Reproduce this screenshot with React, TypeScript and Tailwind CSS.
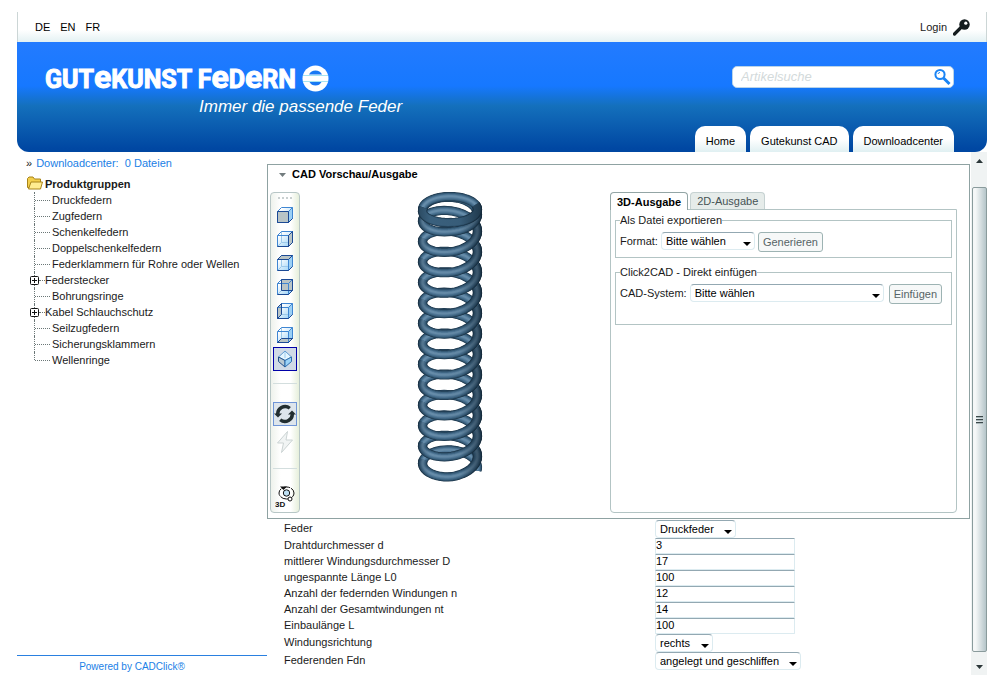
import type { ReactNode } from 'react';
import { useState } from 'react';
import clsx from 'clsx';

const languages = ['DE', 'EN', 'FR'];
const navItems = ['Home', 'Gutekunst CAD', 'Downloadcenter'];

const productGroups = [
  { name: 'Druckfedern' },
  { name: 'Zugfedern' },
  { name: 'Schenkelfedern' },
  { name: 'Doppelschenkelfedern' },
  { name: 'Federklammern für Rohre oder Wellen' },
  { name: 'Federstecker', expandable: true },
  { name: 'Bohrungsringe' },
  { name: 'Kabel Schlauchschutz', expandable: true },
  { name: 'Seilzugfedern' },
  { name: 'Sicherungsklammern' },
  { name: 'Wellenringe' },
];

const dimensions = [
  { id: 'd', label: 'Drahtdurchmesser d', value: '3' },
  { id: 'D', label: 'mittlerer Windungsdurchmesser D', value: '17' },
  { id: 'L0', label: 'ungespannte Länge L0', value: '100' },
  { id: 'n', label: 'Anzahl der federnden Windungen n', value: '12' },
  { id: 'nt', label: 'Anzahl der Gesamtwindungen nt', value: '14' },
  { id: 'L', label: 'Einbaulänge L', value: '100' },
];

const cubeFaces: Record<string, string> = {
  Vorne: '0.5,4.5 11.5,4.5 11.5,15.5 0.5,15.5',
  Rechts: '11.5,4.5 15.5,0.5 15.5,11.5 11.5,15.5',
  Oben: '0.5,4.5 4.5,0.5 15.5,0.5 11.5,4.5',
  Hinten: '4.5,0.5 15.5,0.5 15.5,11.5 4.5,11.5',
  Links: '0.5,4.5 4.5,0.5 4.5,11.5 0.5,15.5',
  Unten: '0.5,15.5 4.5,11.5 15.5,11.5 11.5,15.5',
};

function CubeIcon({ face }: { face: string }) {
  const solid = face === 'Vorne';
  const gradientId = `glass-${face}`;
  return (
    <svg width="16" height="16" viewBox="0 0 16 16" fill="none">
      <defs>
        <linearGradient id={gradientId} x1="0" y1="0" x2="1" y2="1">
          <stop offset="0.2" stopColor="#ffffff" />
          <stop offset="1" stopColor="#8fcdf6" />
        </linearGradient>
      </defs>
      <polygon points="0.5,4.5 4.5,0.5 15.5,0.5 15.5,11.5 11.5,15.5 0.5,15.5" fill={`url(#${gradientId})`} />
      <polygon points="11.5,4.5 15.5,0.5 15.5,11.5 11.5,15.5" fill="#9bd0f5" />
      {!solid && <path d="M4.5 0.5V11.5H15.5M4.5 11.5L0.5 15.5" stroke="#9cc9ea" />}
      <polygon points={cubeFaces[face]} fill="#b8c4c6" />
      <path d="M0.5 4.5H11.5V15.5H0.5ZM0.5 4.5L4.5 0.5H15.5V11.5L11.5 15.5M11.5 4.5L15.5 0.5" stroke="#3f86d2" />
      <polygon points={cubeFaces[face]} stroke="#1c4a94" />
      <path d="M0.5 15.5H11.5L15.5 11.5" stroke="#1c4a94" />
    </svg>
  );
}

function IsoIcon() {
  return (
    <svg width="16" height="18" viewBox="0 0 16 18" fill="none" strokeLinejoin="round">
      <path d="M8 1L14.5 7L8 10.5L1.5 7Z" fill="#e4f5ff" stroke="#5f9ad0" />
      <path d="M1.5 7L8 10.5V17L1.5 11.5Z" fill="#b9c9d2" stroke="#1f4f8a" />
      <path d="M8 10.5L14.5 7V11.5L8 17Z" fill="#9bd3f7" stroke="#2f6fae" />
      <path d="M8 2V8" stroke="#9ccbed" />
    </svg>
  );
}

function RotateIcon() {
  return (
    <svg width="22" height="22" viewBox="0 0 22 22" fill="none">
      <path d="M3.8 12A7.4 7.4 0 0 1 15.8 5.2" stroke="#222e30" strokeWidth="3.4" />
      <path d="M18.2 10A7.4 7.4 0 0 1 6.2 16.8" stroke="#222e30" strokeWidth="3.4" />
      <path d="M0 10.5H8L4 14.5Z" fill="#222e30" />
      <path d="M22 11.5H14L18 7.5Z" fill="#222e30" />
    </svg>
  );
}

function FlashIcon() {
  return (
    <svg width="18" height="22" viewBox="0 0 18 22">
      <path d="M11.5 0.5L1.5 12H7.5L5.5 21.5L16.5 9H10Z" fill="#f1f4f4" stroke="#cbd3d3" strokeLinejoin="round" />
    </svg>
  );
}

function View3dIcon() {
  return (
    <svg width="20" height="24" viewBox="0 0 20 24" fill="none">
      <ellipse cx="11.5" cy="9" rx="7.5" ry="6" stroke="#111" strokeDasharray="8 1" />
      <circle cx="11.5" cy="9" r="3.2" fill="#bfe0f4" stroke="#111" />
      <circle cx="15" cy="15" r="2" fill="#fff" stroke="#111" />
      <path d="M5 2.5H12L8.5 6Z" fill="#111" />
      <text x="0" y="23" fontSize="8" fontFamily="Liberation Sans, sans-serif" fontWeight="bold" fill="#111">3D</text>
    </svg>
  );
}

// height of the wire axis after `turn` windings; the first winding is closed
function axisY(turn: number) {
  if (turn < 0.25) return 17.5;
  if (turn < 1.25) return 17.5 + (turn - 0.25) * 6.5;
  return Math.min(24 + (turn - 1.25) * 20.45, 269.4 + (turn - 13.25) * 8);
}

function coilPath(from: number, to: number) {
  const points: string[] = [];
  for (let i = 0; i <= 28; i++) {
    const turn = from + ((to - from) * i) / 28;
    const angle = turn * Math.PI * 2;
    const depth = turn < 0.5 ? 13 : 15.5;
    points.push(`${(33 + 27.5 * Math.cos(angle)).toFixed(2)},${(axisY(turn) + depth * Math.sin(angle)).toFixed(2)}`);
  }
  return `M${points.join('L')}`;
}

const wireLayers = [
  { width: 9.2, color: '#1b3448', lift: 0 },
  { width: 8.2, color: '#2b4d67', lift: 0 },
  { width: 6.8, color: '#3a607d', lift: 0 },
  { width: 5.2, color: '#476f8e', lift: 0 },
  { width: 3.6, color: '#567d9c', lift: -0.1 },
  { width: 2, color: '#668ca9', lift: -0.2 },
];

function Wire({ from, to, flat = false }: { from: number; to: number; flat?: boolean }) {
  const d = coilPath(from, to);
  const layers = flat ? wireLayers.slice(0, 3) : wireLayers;
  return (
    <g fill="none" strokeLinejoin="round">
      {layers.map((layer) => (
        <path key={layer.width} d={d} stroke={layer.color} strokeWidth={layer.width} transform={`translate(0 ${layer.lift})`} />
      ))}
    </g>
  );
}

function Spring() {
  const windings = Array.from({ length: 14 }, (_, i) => 13 - i);
  return (
    <svg className="mr-[10px]" width="66" height="292" viewBox="0 0 66 292" role="img" aria-label="Druckfeder">
      <defs>
        <linearGradient id="shade" gradientUnits="userSpaceOnUse" x1="0" y1="0" x2="66" y2="0">
          <stop offset="0" stopColor="#0b1a26" stopOpacity="0.35" />
          <stop offset="0.2" stopColor="#0b1a26" stopOpacity="0" />
          <stop offset="0.65" stopColor="#0b1a26" stopOpacity="0.05" />
          <stop offset="1" stopColor="#0b1a26" stopOpacity="0.6" />
        </linearGradient>
      </defs>
      {windings.map((n) => (
        <Wire key={n} from={n + 0.48} to={n + 1.03} />
      ))}
      <Wire from={-0.5} to={0.02} />
      {windings.map((n) => (
        <g key={n}>
          <Wire from={n - 0.06} to={n + 0.54} flat={n === 0} />
          <path d={coilPath(n - 0.06, n + 0.54)} fill="none" stroke="url(#shade)" strokeWidth="9.2" />
        </g>
      ))}
    </svg>
  );
}

interface SelectProps {
  id: string;
  options: string[];
  className: string;
}

function Select({ id, options, className }: SelectProps) {
  return (
    <div className={clsx('relative h-[18px]', className)}>
      <select
        id={id}
        className="block h-full w-full appearance-none rounded-sm border border-[#dcebf0] border-t-[#93a8b2] bg-white pl-1 text-[11px] leading-4 text-black outline-none"
      >
        {options.map((option) => (
          <option key={option}>{option}</option>
        ))}
      </select>
      <svg className="pointer-events-none absolute right-1 bottom-1 h-1 w-2" viewBox="0 0 8 4">
        <path d="M0 0H8L4 4Z" fill="#000" />
      </svg>
    </div>
  );
}

function ToolButton({ label, variant, children }: { label: string; variant?: 'selected' | 'active'; children: ReactNode }) {
  return (
    <button
      type="button"
      aria-label={label}
      className={clsx(
        'flex size-6 shrink-0 items-center justify-center',
        variant === 'selected' && 'border border-[#0000a8] bg-[#d0dae6]',
        variant === 'active' && 'border border-[#6f95d6] bg-[#dde5ec]',
      )}
    >
      {children}
    </button>
  );
}

function Header() {
  return (
    <header>
      <div className="flex h-[30px] items-center justify-between border-x border-[#ccd6d6] bg-linear-to-b from-white from-60% to-[#e3f1f3] pr-4 pl-[17px]">
        <nav className="flex gap-[10px]">
          {languages.map((lang) => (
            <a key={lang} href="#" className="text-black">{lang}</a>
          ))}
        </nav>
        <a href="#" className="flex items-center gap-[6px]">
          Login
          <svg width="17" height="17" viewBox="0 0 17 17">
            <path d="M1.5 15L9 7.5" stroke="#141c1e" strokeWidth="3.2" strokeLinecap="round" />
            <circle cx="11.5" cy="5.5" r="5.2" fill="#141c1e" />
            <circle cx="12.8" cy="4.2" r="1.6" fill="#fff" />
          </svg>
        </a>
      </div>
      <div className="flex h-[110px] justify-between rounded-b-xl bg-[linear-gradient(#237bff,#1678ff_40%,#1470bc_58%,#0047a2_97%)] pr-[33px] pl-7">
        <div className="pt-5">
          <div className="flex h-8 items-center gap-[6px] font-[Roboto,sans-serif] text-[25px] font-bold text-white [-webkit-text-stroke:1px_white]">
            <span className="leading-8">
              GUT<span className="text-[32px] leading-8">e</span>KUNST F<span className="text-[32px] leading-8">e</span>D
              <span className="text-[32px] leading-8">e</span>RN
            </span>
            <svg width="27" height="27" viewBox="0 0 27 27">
              <circle cx="13.5" cy="13.5" r="13" fill="#fff" />
              <path d="M7 9.5A7.2 7.2 0 0 1 20 9.5ZM7.5 17A6.8 6.8 0 0 0 19.5 17Z" fill="#1878f4" />
              <path d="M1 10.5H26M1 16.5H26" stroke="#8fdcee" strokeWidth="0.8" />
            </svg>
          </div>
          <p className="pl-[154px] text-[17px] leading-[26px] text-white italic">Immer die passende Feder</p>
        </div>
        <div className="flex flex-col items-end justify-between pt-6">
          <form className="flex h-[22px] w-[222px] items-center rounded-[5px] border border-[#b9d3e8] bg-white pr-[2px] pl-2">
            <input
              type="text"
              aria-label="Artikelsuche"
              placeholder="Artikelsuche"
              className="min-w-0 flex-1 text-[13px] leading-5 italic outline-none placeholder:text-[#d3dadb]"
            />
            <button type="button" aria-label="Suchen">
              <svg width="17" height="18" viewBox="0 0 17 18" fill="none">
                <circle cx="6" cy="6.5" r="4.6" stroke="#1a84f5" strokeWidth="2" />
                <path d="M9.5 10L15.5 16" stroke="#1a84f5" strokeWidth="3" />
                <path d="M4 6A2 2 0 0 1 6 4.5" stroke="#1a84f5" />
              </svg>
            </button>
          </form>
          <nav className="flex gap-1">
            {navItems.map((item) => (
              <a key={item} href="#" className="h-[26px] rounded-t-[10px] bg-linear-to-b from-white from-50% to-[#e0f0f2] px-[11px] pt-2 text-black">
                {item}
              </a>
            ))}
          </nav>
        </div>
      </div>
    </header>
  );
}

function Sidebar() {
  return (
    <aside className="flex w-[250px] shrink-0 flex-col">
      <div className="flex h-[22px] items-center gap-1 pl-[9px]">
        <span>»</span>
        <a href="#" className="whitespace-pre text-[#1a80e6]">Downloadcenter:  0 Dateien</a>
      </div>
      <div className="flex h-[18px] items-center gap-[2px] pt-px pl-[10px] font-bold">
        <svg width="16" height="15" viewBox="0 0 16 15">
          <path d="M0.5 11.5V2.5L2 1H6L7.5 3H13.5V11.5Z" fill="#f3cf4c" stroke="#a8841a" />
          <path d="M1.5 13L4 6H15.5L13.5 13Z" fill="#ffec90" stroke="#a8841a" strokeLinejoin="round" />
        </svg>
        <span>Produktgruppen</span>
      </div>
      <ul>
        {productGroups.map((group, i) => (
          <li key={group.name} className="flex h-4 items-center pl-[17px]">
            <span
              className={clsx(
                'border-l border-dotted border-[#6b7777]',
                i === productGroups.length - 1 ? 'h-2 self-start' : 'h-4',
              )}
            />
            {group.expandable ? (
              <>
                <button type="button" aria-label={`${group.name} öffnen`} className="-ml-[5px] bg-white">
                  <svg width="9" height="9" viewBox="0 0 9 9" fill="none" stroke="#111">
                    <rect x="0.5" y="0.5" width="8" height="8" rx="1" />
                    <path d="M2 4.5H7M4.5 2V7" />
                  </svg>
                </button>
                <span className="w-[6px] border-t border-dotted border-[#6b7777]" />
              </>
            ) : (
              <span className="mr-[2px] w-[15px] border-t border-dotted border-[#6b7777]" />
            )}
            <a href="#">{group.name}</a>
          </li>
        ))}
      </ul>
      <footer className="mt-auto h-5 border-t border-[#2a80e0] pt-[3px] pr-5 text-center">
        <a href="#" className="text-[10px] leading-4 text-[#1a80e6]">Powered by CADClick®</a>
      </footer>
    </aside>
  );
}

function Toolbar() {
  return (
    <div className="flex w-[30px] flex-col items-center rounded border border-[#b7c6c6] bg-[linear-gradient(90deg,#eef2ec,#ffffff_35%,#ffffff_70%,#e6efdb)] pb-1">
      <span className="mt-1 mb-1 w-[14px] border-t-2 border-dotted border-[#c9d0d0]" />
      {Object.keys(cubeFaces).map((face) => (
        <ToolButton key={face} label={face}>
          <CubeIcon face={face} />
        </ToolButton>
      ))}
      <ToolButton label="Isometrisch" variant="selected">
        <IsoIcon />
      </ToolButton>
      <hr className="mt-3 mb-[18px] w-6 border-[#d3dede]" />
      <ToolButton label="Drehen" variant="active">
        <RotateIcon />
      </ToolButton>
      <div className="mt-1">
        <ToolButton label="Blitz">
          <FlashIcon />
        </ToolButton>
      </div>
      <hr className="mt-[14px] mb-[15px] w-6 border-[#d3dede]" />
      <ToolButton label="3D">
        <View3dIcon />
      </ToolButton>
    </div>
  );
}

const outputButton = 'h-5 rounded-[3px] border border-[#9db3b3] bg-[#f6f8f8] px-1 text-[#566466]';

function OutputPanel() {
  const [tab, setTab] = useState('3D-Ausgabe');

  return (
    <div className="flex w-[347px] flex-col">
      <div className="flex gap-[2px]">
        {['3D-Ausgabe', '2D-Ausgabe'].map((name) => (
          <button
            key={name}
            type="button"
            onClick={() => setTab(name)}
            className={clsx(
              'rounded-t border border-b-0 leading-4',
              tab === name
                ? 'relative -mb-px h-[18px] border-[#93a5a5] bg-white px-[6px] font-bold text-black'
                : 'h-[17px] border-[#c6d2d2] bg-[#e6ecea] px-[6px] text-[#475354]',
            )}
          >
            {name}
          </button>
        ))}
      </div>
      <div className="flex flex-1 flex-col gap-2 rounded-b border border-[#b3c4c4] p-1">
        <fieldset className="border border-[#b3c4c4] px-1 pb-[5px]">
          <legend className="leading-3">Als Datei exportieren</legend>
          <div className="flex gap-[3px] pt-[6px]">
            <label htmlFor="format" className="leading-[18px]">Format:</label>
            <Select id="format" options={['Bitte wählen', 'STEP', 'IGES']} className="w-[94px]" />
            <button type="button" className={outputButton}>Generieren</button>
          </div>
        </fieldset>
        <fieldset className="border border-[#b3c4c4] px-1 pb-5">
          <legend className="leading-3">Click2CAD - Direkt einfügen</legend>
          <div className="flex gap-[3px] pt-[6px]">
            <label htmlFor="cad-system" className="leading-[18px]">CAD-System:</label>
            <Select id="cad-system" options={['Bitte wählen', 'SolidWorks', 'Inventor']} className="mr-[2px] w-[194px]" />
            <button type="button" className={outputButton}>Einfügen</button>
          </div>
        </fieldset>
      </div>
    </div>
  );
}

function Preview() {
  return (
    <section className="border border-[#8fa2a2] pb-[5px]">
      <h2 className="flex h-[27px] items-start gap-[6px] pt-[2px] pl-[11px] leading-[14px] font-bold text-black">
        <svg width="7" height="14" viewBox="0 0 7 14">
          <path d="M0 6H7L3.5 10Z" fill="#727c7e" />
        </svg>
        CAD Vorschau/Ausgabe
      </h2>
      <div className="flex justify-between pr-3 pl-[2px]">
        <Toolbar />
        <Spring />
        <OutputPanel />
      </div>
    </section>
  );
}

function SpringForm() {
  return (
    <form className="grid grid-cols-[371px_1fr] items-start pt-px pl-[17px] leading-4">
      <label htmlFor="feder">Feder</label>
      <Select id="feder" options={['Druckfeder', 'Zugfeder']} className="w-[81px]" />
      {dimensions.map((dim) => (
        <div key={dim.id} className="contents">
          <label htmlFor={dim.id} className="leading-[14px]">{dim.label}</label>
          <input
            id={dim.id}
            type="text"
            defaultValue={dim.value}
            className="h-4 w-[140px] rounded-[1px] border border-[#dcebf0] border-t-[#93a8b2] pb-[2px] leading-3 text-black outline-none"
          />
        </div>
      ))}
      <label htmlFor="richtung">Windungsrichtung</label>
      <Select id="richtung" options={['rechts', 'links']} className="w-[58px]" />
      <label htmlFor="enden">Federenden Fdn</label>
      <Select id="enden" options={['angelegt und geschliffen', 'angelegt']} className="w-[146px]" />
    </form>
  );
}

function ScrollBar() {
  return (
    <div className="flex w-4 shrink-0 flex-col items-center bg-[#f0f3f3]" aria-hidden="true">
      <svg className="mt-[7px] mb-[24px]" width="7" height="4" viewBox="0 0 7 4">
        <path d="M0 4H7L3.5 0Z" fill="#2b3638" />
      </svg>
      <div className="flex w-[15px] flex-1 items-center justify-center rounded-xs border border-[#8a9b9c] bg-linear-to-r from-[#f5f7f7] from-20% to-[#b5c5c9]">
        <svg width="7" height="8" viewBox="0 0 7 8" stroke="#3c484a">
          <path d="M0 0.5H7M0 3.5H7M0 6.5H7" />
          <path d="M0 1.5H7M0 4.5H7M0 7.5H7" stroke="#a9b8ba" />
        </svg>
      </div>
      <svg className="mt-[13px] mb-[6px]" width="7" height="4" viewBox="0 0 7 4">
        <path d="M0 0H7L3.5 4Z" fill="#2b3638" />
      </svg>
    </div>
  );
}

export default function App() {
  return (
    <div className="flex min-h-screen flex-col bg-white px-[17px] pt-3 pb-[22px] font-['Liberation_Sans',Arial,sans-serif] text-[11px] leading-[14px] text-[#1a1a1a]">
      <Header />
      <div className="flex flex-1">
        <Sidebar />
        <main className="min-w-0 flex-1 pt-3 pr-px">
          <Preview />
          <SpringForm />
        </main>
        <ScrollBar />
      </div>
    </div>
  );
}
